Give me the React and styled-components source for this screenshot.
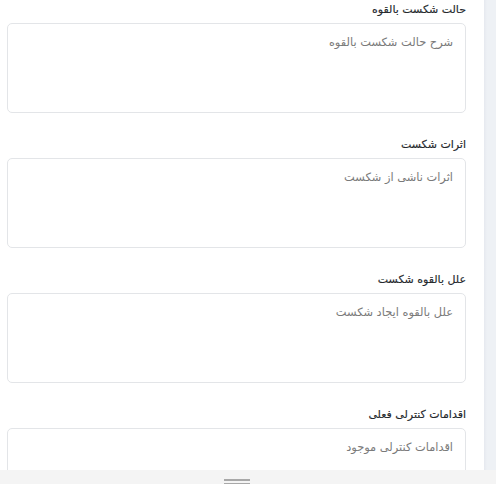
import React from "react";
import styled, { createGlobalStyle } from "styled-components";

const Global = createGlobalStyle`
  html, body { margin: 0; padding: 0; background: #ffffff; }
  body { font-family: "DejaVu Sans", "Noto Sans", sans-serif; }
  * { box-sizing: border-box; }
`;

const Frame = styled.div`
  width: 496px;
  height: 484px;
  display: flex;
  flex-direction: column;
  overflow: hidden;
  background: #ffffff;
`;

const MainRow = styled.div`
  flex: 1;
  display: flex;
  min-height: 0;
`;

const Content = styled.div`
  flex: 1;
  direction: rtl;
  padding: 0 18px 0 7px;
  overflow: hidden;
  background: #ffffff;
`;

const SidePanel = styled.div`
  width: 12px;
  background: linear-gradient(to right, #e6e9ef 0px, #eef1f5 3px, #eef1f5 100%);
`;

const Field = styled.div`
  display: flex;
  flex-direction: column;
  margin-bottom: 22px;
`;

const Label = styled.label`
  font-size: 11px;
  font-weight: normal;
  line-height: 20px;
  color: #24282c;
  margin-bottom: 3px;
  -webkit-text-stroke: 0.15px #24282c;
`;

const TextArea = styled.textarea`
  width: 100%;
  height: 90px;
  padding: 10px 12px;
  border: 1px solid #e3e5e8;
  border-radius: 5px;
  font-family: "DejaVu Sans", "Noto Sans", sans-serif;
  font-size: 11.4px;
  line-height: 16px;
  color: #333;
  direction: rtl;
  resize: none;
  outline: none;
  background: #ffffff;
  &::placeholder { color: #7a7a7a; }
`;

const BottomBar = styled.div`
  height: 14px;
  background: #f4f4f4;
  display: flex;
  justify-content: flex-start;
  padding-left: 224px;
  padding-top: 9px;
`;

const Handle = styled.div`
  width: 26px;
  height: 6px;
  border-top: 2px solid #a8a8a8;
  border-bottom: 2px solid #a8a8a8;
`;

const fields = [
  { label: "حالت شکست بالقوه", placeholder: "شرح حالت شکست بالقوه" },
  { label: "اثرات شکست", placeholder: "اثرات ناشی از شکست" },
  { label: "علل بالقوه شکست", placeholder: "علل بالقوه ایجاد شکست" },
  { label: "اقدامات کنترلی فعلی", placeholder: "اقدامات کنترلی موجود" },
];

export default function App() {
  return (
    <>
      <Global />
      <Frame>
        <MainRow>
          <Content>
            {fields.map((f) => (
              <Field key={f.label}>
                <Label>{f.label}</Label>
                <TextArea placeholder={f.placeholder} />
              </Field>
            ))}
          </Content>
          <SidePanel />
        </MainRow>
        <BottomBar>
          <Handle />
        </BottomBar>
      </Frame>
    </>
  );
}
